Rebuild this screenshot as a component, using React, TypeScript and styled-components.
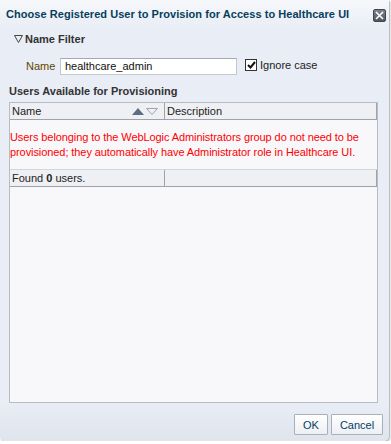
import styled, { createGlobalStyle } from 'styled-components';

const GlobalStyle = createGlobalStyle`
  html, body {
    margin: 0;
    padding: 0;
    background: #ffffff;
  }
  body {
    font-family: 'Liberation Sans', Arial, sans-serif;
    font-size: 11px;
  }
`

const Dialog = styled.div`
  width: 389px;
  height: 441px;
  box-sizing: border-box;
  background: #e9edf5;
  border-radius: 0 0 5px 5px;
  box-shadow: 1px 1px 2px rgba(0, 0, 0, 0.35);
  display: flex;
  flex-direction: column;
  overflow: hidden;
`

const TitleBar = styled.div`
  height: 28px;
  display: flex;
  align-items: center;
  justify-content: space-between;
  padding: 0 3px 0 6px;
  background: linear-gradient(#f6f8fb, #e9edf5);
`

const Title = styled.h1`
  margin: 0;
  font-size: 11px;
  font-weight: bold;
  color: #073e5c;
  white-space: nowrap;
  letter-spacing: 0.05px;
`

const CloseButton = styled.button`
  width: 13px;
  height: 13px;
  padding: 0;
  border: 1px solid #3f4650;
  border-radius: 2px;
  background: linear-gradient(#7b838f, #4f5661);
  display: flex;
  align-items: center;
  justify-content: center;
  margin-top: 2px;
`

const Body = styled.div`
  flex: 1;
  display: flex;
  flex-direction: column;
  padding: 0 11px 0 9px;
`

const FilterHeader = styled.div`
  display: flex;
  align-items: center;
  gap: 2px;
  height: 20px;
  margin-top: 1px;
  padding-left: 5px;
  font-weight: bold;
  font-size: 11px;
  color: #333333;
`

const FilterRow = styled.div`
  display: flex;
  align-items: center;
  height: 22px;
  margin-top: 6px;
  padding-left: 17px;
`

const FieldLabel = styled.label`
  color: #5f4600;
  width: 34px;
`

const TextInput = styled.input`
  width: 177px;
  height: 17px;
  box-sizing: border-box;
  border: 1px solid #c4c8ce;
  border-top-color: #a5a9b1;
  background: #ffffff;
  font-family: inherit;
  font-size: 11px;
  color: #111;
  padding: 0 4px;
`

const CheckLabel = styled.label`
  display: flex;
  align-items: center;
  gap: 3px;
  margin-left: 8px;
  margin-top: -3px;
  color: #222;
`

const Box = styled.span`
  width: 10px;
  height: 10px;
  border: 1px solid #333;
  background: #fff;
  display: flex;
  align-items: center;
  justify-content: center;
`

const SectionTitle = styled.h2`
  margin: 5px 0 0 0;
  height: 18px;
  line-height: 18px;
  font-size: 11px;
  font-weight: bold;
  color: #333333;
`

const Table = styled.div`
  margin-top: 2px;
  flex: 1;
  border: 1px solid #b9bcc2;
  background: #f8f8fa;
  display: flex;
  flex-direction: column;
`

const Row = styled.div`
  display: grid;
  grid-template-columns: 155px 1fr;
  height: 17px;
  background: #eff0f4;
  border-bottom: 1px solid #9fa2a8;
  border-right: 1px solid #9fa2a8;
  box-sizing: border-box;
`

const Cell = styled.div<{ $sep?: boolean }>`
  display: flex;
  align-items: center;
  padding-left: 2px;
  border-right: ${p => (p.$sep ? '1px solid #9fa2a8' : 'none')};
  color: #222;
  justify-content: space-between;
`

const SortIcons = styled.span`
  display: flex;
  gap: 2px;
  padding-right: 6px;
`

const Message = styled.p`
  margin: 0;
  height: 50px;
  box-sizing: border-box;
  padding: 10px 2px 0 0;
  color: #ff0000;
  line-height: 15px;
  white-space: nowrap;
  letter-spacing: -0.08px;
  border-bottom: 1px solid #d4d6da;
`

const Footer = styled.div`
  height: 38px;
  box-sizing: border-box;
  display: flex;
  justify-content: flex-end;
  align-items: flex-start;
  gap: 3px;
  padding: 11px 6px 0 0;
  background: linear-gradient(#e9edf5, #dfe4ed);
`

const Button = styled.button<{ $w: number }>`
  width: ${p => p.$w}px;
  height: 21px;
  font-family: inherit;
  font-size: 11px;
  color: #073e5c;
  background: linear-gradient(#ffffff, #eceff5);
  border: 1px solid #aab0ba;
  border-radius: 1px;
  padding: 0;
`

export default function App() {
  return (
    <>
      <GlobalStyle />
      <Dialog>
        <TitleBar>
          <Title>Choose Registered User to Provision for Access to Healthcare UI</Title>
          <CloseButton aria-label="Close">
            <svg width="9" height="9" viewBox="0 0 9 9">
              <path d="M1 1 L8 8 M8 1 L1 8" stroke="#ffffff" strokeWidth="1.6" />
            </svg>
          </CloseButton>
        </TitleBar>
        <Body>
          <FilterHeader>
            <svg width="9" height="8" viewBox="0 0 9 8">
              <path d="M0.5 0.5 H8.5 L4.5 7.5 Z" fill="none" stroke="#444" strokeWidth="1" />
            </svg>
            Name Filter
          </FilterHeader>
          <FilterRow>
            <FieldLabel>Name</FieldLabel>
            <TextInput defaultValue="healthcare_admin" />
            <CheckLabel>
              <Box>
                <svg width="9" height="8" viewBox="0 0 9 8">
                  <path d="M1 4 L3.5 6.5 L8 1" fill="none" stroke="#111" strokeWidth="2" />
                </svg>
              </Box>
              Ignore case
            </CheckLabel>
          </FilterRow>
          <SectionTitle>Users Available for Provisioning</SectionTitle>
          <Table>
            <Row>
              <Cell $sep>
                Name
                <SortIcons>
                  <svg width="12" height="7" viewBox="0 0 12 7">
                    <path d="M6 0 L12 7 H0 Z" fill="#5d6e84" />
                  </svg>
                  <svg width="12" height="7" viewBox="0 0 12 7">
                    <path d="M0.5 0.5 H11.5 L6 6.5 Z" fill="none" stroke="#9aa3b0" strokeWidth="1" />
                  </svg>
                </SortIcons>
              </Cell>
              <Cell>Description</Cell>
            </Row>
            <Message>
              Users belonging to the WebLogic Administrators group do not need to be
              <br />
              provisioned; they automatically have Administrator role in Healthcare UI.
            </Message>
            <Row>
              <Cell $sep>
                <span>Found <b>0</b> users.</span>
              </Cell>
              <Cell />
            </Row>
          </Table>
        </Body>
        <Footer>
          <Button $w={34}>OK</Button>
          <Button $w={52}>Cancel</Button>
        </Footer>
      </Dialog>
    </>
  )
}
